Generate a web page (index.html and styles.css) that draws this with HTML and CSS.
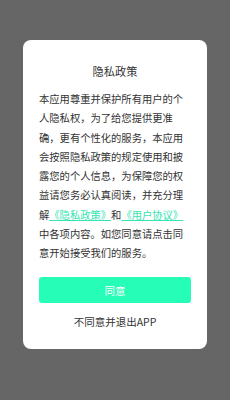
FILE: index.html
```html
<!DOCTYPE html>
<html lang="zh-CN">
<head>
  <meta charset="UTF-8">
  <title>隐私政策</title>
  <link rel="stylesheet" href="styles.css">
</head>
<body>
  <div class="overlay">
    <div class="dialog">
      <div class="dialog-title">隐私政策</div>
      <p class="dialog-text">本应用尊重并保护所有用户的个人隐私权，为了给您提供更准确，更有个性化的服务，本应用会按照隐私政策的规定使用和披露您的个人信息，为保障您的权益请您务必认真阅读，并充分理解<a class="link" href="#">《隐私政策》</a>和<a class="link" href="#">《用户协议》</a>中各项内容。如您同意请点击同意开始接受我们的服务。</p>
      <button class="btn-agree">同意</button>
      <div class="btn-exit">不同意并退出APP</div>
    </div>
  </div>
</body>
</html>
```

FILE: styles.css
```css
body {
  margin: 0;
  padding: 0;
  background: #666666;
  font-family: "Noto Sans CJK SC", "Noto Sans", sans-serif;
  color: #333;
}
.overlay {
  width: 230px;
  height: 400px;
  padding-top: 40px;
  box-sizing: border-box;
}
/* white dialog card */
.dialog {
  margin: 0 23px;
  background: #fff;
  border-radius: 8px;
  padding: 23px 16px 19px;
}
.dialog-title {
  text-align: center;
  font-size: 11.2px;
  line-height: 16px;
  color: #333;
}
.dialog-text {
  margin: 10px 0 0;
  font-size: 10.3px;
  line-height: 19.25px;
  color: #333;
  word-break: break-all;
  text-spacing-trim: space-all;
}
.link {
  color: #33e5b0;
  text-decoration: underline;
}
.btn-agree {
  display: block;
  width: 100%;
  height: 26px;
  margin-top: 15px;
  border: none;
  border-radius: 3px;
  background: #26fdb6;
  color: #fff;
  font-family: inherit;
  font-size: 10.5px;
  padding: 0;
}
.btn-exit {
  margin-top: 11px;
  text-align: center;
  font-size: 10.5px;
  line-height: 16px;
  color: #333;
}
```
